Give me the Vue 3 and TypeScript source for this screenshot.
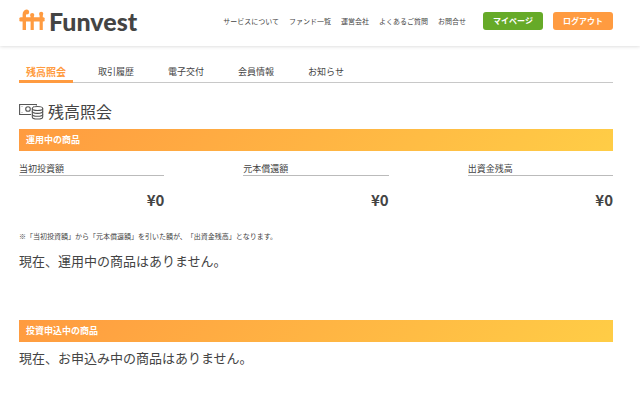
<script setup lang="ts">
import { ref } from 'vue'

interface Balance {
  label: string
  amount: string
}

const siteLinks: string[] = ['サービスについて', 'ファンド一覧', '運営会社', 'よくあるご質問', 'お問合せ']
const tabs: string[] = ['残高照会', '取引履歴', '電子交付', '会員情報', 'お知らせ']
const activeTab = ref<string>('残高照会')
const balances: Balance[] = [
  { label: '当初投資額', amount: '¥0' },
  { label: '元本償還額', amount: '¥0' },
  { label: '出資金残高', amount: '¥0' },
]
</script>

<template>
  <div class="page">
    <header class="header">
      <a class="logo" href="#">
        <svg class="logo-mark" viewBox="0 0 27 24" aria-hidden="true">
          <g fill="none" stroke="#ff9b40">
            <path d="M5.3 21V5.5Q5.3 2.4 8.2 2.6" stroke-width="3.4" />
            <path d="M13.2 6V21M22.2 5V21" stroke-width="3.2" />
            <path d="M1.7 9.7H24.3M1.7 11.1H24.3" stroke-width="3" stroke-linecap="round" />
          </g>
          <g fill="#ff9b40">
            <circle cx="7.6" cy="2.9" r="2.5" />
            <circle cx="13.2" cy="6" r="2.1" />
            <circle cx="22.2" cy="4.8" r="2.1" />
          </g>
        </svg>
        <span class="logo-name">Funvest</span>
      </a>
      <nav class="site-nav">
        <a v-for="link in siteLinks" :key="link" href="#">{{ link }}</a>
      </nav>
      <div class="actions">
        <button type="button" class="button mypage">マイページ</button>
        <button type="button" class="button logout">ログアウト</button>
      </div>
    </header>

    <main class="main">
      <nav class="tabs">
        <a
          v-for="tab in tabs"
          :key="tab"
          href="#"
          class="tab"
          :class="{ active: tab === activeTab }"
          @click.prevent="activeTab = tab"
        >{{ tab }}</a>
      </nav>

      <h1 class="title">
        <svg class="title-icon" viewBox="0 0 25 17" aria-hidden="true">
          <g fill="none" stroke="#555" stroke-width="1.1">
            <path d="M12 11.5H.6V1.5H17.4V2.5" />
            <circle cx="9" cy="6" r="2.3" />
            <path d="M2.5 3.5H3.5M14 3.5H15M2.5 9.5H3.5" stroke-width=".5" />
            <ellipse cx="18.5" cy="5.5" rx="5.2" ry="2" />
            <path d="M13.3 5.5V14C13.3 16.7 23.7 16.7 23.7 14V5.5" />
            <path d="M13.3 8.3C13.3 11 23.7 11 23.7 8.3M13.3 11.2C13.3 13.9 23.7 13.9 23.7 11.2" />
          </g>
        </svg>
        <span>残高照会</span>
      </h1>

      <section class="active-products">
        <h2 class="bar">運用中の商品</h2>
        <dl class="balances">
          <div v-for="item in balances" :key="item.label" class="balance">
            <dt>{{ item.label }}</dt>
            <dd>{{ item.amount }}</dd>
          </div>
        </dl>
        <p class="note">※「当初投資額」から「元本償還額」を引いた額が、「出資金残高」となります。</p>
        <p class="message">現在、運用中の商品はありません。</p>
      </section>

      <section>
        <h2 class="bar">投資申込中の商品</h2>
        <p class="message">現在、お申込み中の商品はありません。</p>
      </section>
    </main>
  </div>
</template>

<style>
body {
  margin: 0;
  background: #fff;
}
</style>

<style scoped>
.page {
  color: #444;
  font-family: "Noto Sans CJK JP", "Noto Sans", sans-serif;
  text-spacing-trim: space-all;
}

a {
  color: inherit;
  text-decoration: none;
}

.header {
  display: flex;
  align-items: center;
  height: 42px;
  padding: 0 27px 4px 19px;
  box-shadow: 0 0 4px rgba(0, 0, 0, 0.2);
}

.logo {
  display: flex;
  align-items: center;
  gap: 3px;
  margin-right: auto;
}

.logo-mark {
  width: 27px;
  height: 24px;
}

.logo-name {
  font: 900 25px/38px Lato, sans-serif;
}

.site-nav {
  display: flex;
  gap: 10px;
  margin-right: 17px;
  font-size: 7px;
  line-height: 12px;
}

.actions {
  display: flex;
  gap: 10px;
}

.button {
  width: 60px;
  height: 18px;
  padding: 0;
  border: 0;
  border-radius: 3px;
  color: #fff;
  font: bold 8px/18px "Noto Sans CJK JP", sans-serif;
}

.mypage {
  background: #66aa28;
}

.logout {
  background: #ff9b40;
}

.main {
  padding: 17px 27px 24px 19px;
}

.tabs {
  display: flex;
  gap: 16px;
  border-bottom: 1px solid #c8c8c8;
}

.tab {
  width: 54px;
  font-size: 9px;
  line-height: 18px;
  text-align: center;
}

.tab.active {
  margin-bottom: -1px;
  border-bottom: 3px solid #ff9b40;
  color: #ff9b40;
  font-size: 10px;
  font-weight: bold;
  line-height: 17px;
}

.title {
  display: flex;
  align-items: center;
  gap: 4px;
  margin: 16px 0 6px;
  font-size: 16px;
  font-weight: normal;
  line-height: 24px;
}

.title-icon {
  width: 25px;
  height: 17px;
}

.bar {
  margin: 0;
  padding: 0 7px;
  background: linear-gradient(135deg, #ff9b40, #ffcd46);
  color: #fff;
  font-size: 9px;
  line-height: 22px;
}

.balances {
  display: grid;
  grid-template-columns: repeat(3, 1fr);
  gap: 79px;
  margin: 12px 0 18px;
}

.balance dt {
  border-bottom: 1px solid #bbb;
  font-size: 9px;
  line-height: 12px;
}

.balance dd {
  margin: 13px 0 0;
  font-size: 15px;
  font-weight: bold;
  line-height: 22px;
  text-align: right;
}

.note {
  margin: 0 0 8px;
  font-size: 7px;
  line-height: 14px;
}

.message {
  margin: 6px 0 0;
  font-size: 13px;
  line-height: 20px;
}

.active-products {
  margin-bottom: 49px;
}
</style>
